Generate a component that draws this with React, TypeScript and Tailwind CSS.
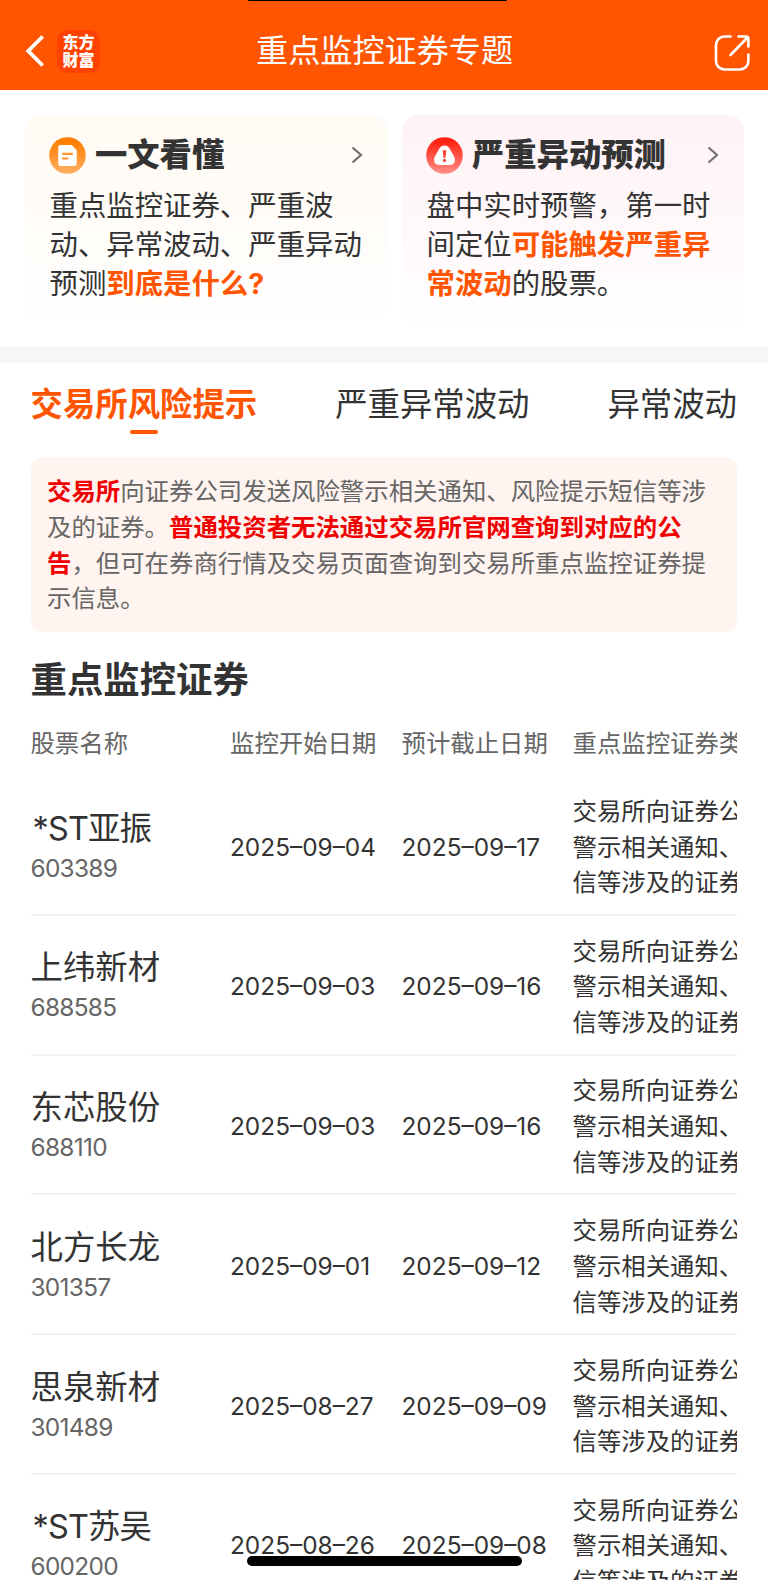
import type { ReactNode } from "react"

interface Stock {
  name: string
  code: string
  start: string
  end: string
}

const stocks: Stock[] = [
  { name: "*ST亚振", code: "603389", start: "2025–09–04", end: "2025–09–17" },
  { name: "上纬新材", code: "688585", start: "2025–09–03", end: "2025–09–16" },
  { name: "东芯股份", code: "688110", start: "2025–09–03", end: "2025–09–16" },
  { name: "北方长龙", code: "301357", start: "2025–09–01", end: "2025–09–12" },
  { name: "思泉新材", code: "301489", start: "2025–08–27", end: "2025–09–09" },
  { name: "*ST苏吴", code: "600200", start: "2025–08–26", end: "2025–09–08" },
]

function DocIcon() {
  return (
    <svg viewBox="0 0 37 37" className="h-[37px] w-[37px] shrink-0">
      <defs>
        <linearGradient id="doc" x1="0" y1="0" x2="0" y2="1">
          <stop offset="0.1" stopColor="#ff7d00" />
          <stop offset="1" stopColor="#ffaf66" />
        </linearGradient>
      </defs>
      <circle cx="18.5" cy="18.5" r="18.3" fill="url(#doc)" />
      <path
        d="M11.5 8h10.2a2 2 0 0 1 1.4.6l4 4a2 2 0 0 1 .6 1.400v12.700a2.300 2.300 0 0 1-2.300 2.300H11.500a2.300 2.300 0 0 1-2.300-2.300V10.300a2.300 2.300 0 0 1 2.300-2.300Z"
        fill="#fff"
      />
      <path d="M14 16.800h9M14 21.500h4.500" stroke="#ff9229" strokeWidth="2.200" strokeLinecap="round" />
    </svg>
  )
}

function AlertIcon() {
  return (
    <svg viewBox="0 0 37 37" className="h-[37px] w-[37px] shrink-0">
      <defs>
        <linearGradient id="alert" x1="0" y1="0" x2="0" y2="1">
          <stop offset="0.1" stopColor="#ff2110" />
          <stop offset="1" stopColor="#ff8f88" />
        </linearGradient>
      </defs>
      <circle cx="18.5" cy="18.5" r="18.3" fill="url(#alert)" />
      <path
        d="M18.5 8.600c2.200 0 3.900 1 5.200 3.100l4 7c2.600 4.800 1 9.300-4.200 9.300h-10c-5.200 0-6.800-4.500-4.200-9.300l4-7c1.300-2.100 3-3.100 5.200-3.100Z"
        fill="#fff"
      />
      <path d="M16.600 13.200h3.800l-.9 7.600h-2Z" fill="#ff4035" />
      <circle cx="18.5" cy="23.400" r="1.600" fill="#ff4035" />
    </svg>
  )
}

function Chevron() {
  return (
    <svg viewBox="0 0 12 18" className="ml-auto h-[18px] w-3" fill="none" stroke="#707070" strokeWidth="2.200">
      <path d="m1.500 1.500 8.500 7.500-8.500 7.500" />
    </svg>
  )
}

function InfoCard({
  icon,
  title,
  className,
  children,
}: {
  icon: ReactNode
  title: string
  className: string
  children: ReactNode
}) {
  return (
    <div className={`h-[216px] rounded-2xl bg-linear-to-b to-white pt-[19px] pl-6 ${className}`}>
      <div className="flex h-[42px] items-center">
        {icon}
        <h2 className="ml-[9px] text-[32.300px] leading-[42px] font-black whitespace-nowrap">{title}</h2>
        <Chevron />
      </div>
      <p className="mt-[9.500px] ml-[0.500px] text-[28.400px] leading-[39.300px] whitespace-nowrap">{children}</p>
    </div>
  )
}

export default function App() {
  return (
    <div
      lang="zh-CN"
      className="relative h-[1580px] w-[768px] overflow-hidden bg-white font-[Inter,'Noto_Sans_CJK_SC',sans-serif] text-[#333]"
    >
      <div className="absolute top-0 left-[248px] h-px w-[259px] rounded-b-full bg-black" />

      <header className="flex h-[90px] items-center bg-[#ff5500] pt-3 text-white">
        <svg viewBox="0 0 20 32" className="ml-[25px] h-8 w-5" fill="none" stroke="#fff" strokeWidth="3.800">
          <path d="M17.700 1.500 3.300 16l14.400 14.500" />
        </svg>
        <div className="ml-3 flex h-[43px] w-[43px] flex-col items-center justify-center rounded-[10px] bg-[#ff4200] pt-px text-[16px] leading-[17.500px] font-black">
          <span>东方</span>
          <span>财富</span>
        </div>
        <h1 className="ml-[156px] text-[32.150px] leading-[48px]">重点监控证券专题</h1>
        <svg
          viewBox="0 0 38 38"
          className="mt-1 ml-auto mr-[17px] h-[38px] w-[38px]"
          fill="none"
          stroke="#fff"
          strokeWidth="2.600"
          strokeLinecap="round"
        >
          <path d="M17.500 2.500H11.500a8.500 8.500 0 0 0-8.500 8.500v16a8.500 8.500 0 0 0 8.500 8.500h15.400a8.500 8.500 0 0 0 8.500-8.500v-6.500" />
          <path d="M25.500 2.500h7.400a2.500 2.500 0 0 1 2.500 2.500v7.500M34.500 3.500l-17 17.500" />
        </svg>
      </header>

      <section className="flex h-[257px] gap-[15px] pt-[25px] pl-[25px]">
        <InfoCard icon={<DocIcon />} title="一文看懂" className="w-[362px] from-[#fffaf3] pr-6">
          重点监控证券、严重波
          <br />
          动、异常波动、严重异动
          <br />
          预测<b className="text-[#ff5500]">到底是什么?</b>
        </InfoCard>
        <InfoCard icon={<AlertIcon />} title="严重异动预测" className="w-[342px] from-[#fff2f5] pr-[25px]">
          盘中实时预警，第一时
          <br />
          间定位<b className="text-[#ff5500]">可能触发严重异</b>
          <br />
          <b className="text-[#ff5500]">常波动</b>的股票。
        </InfoCard>
      </section>

      <div className="h-4 bg-[#f7f7f9]" />

      <main className="pr-[31px] pl-[30.500px]">
        <nav className="flex h-[94px] justify-between pt-[18px] text-[32.400px] leading-[48px] whitespace-nowrap">
          <div className="flex flex-col items-center font-bold text-[#ff5500]">
            交易所风险提示
            <span className="mt-px h-1 w-7 rounded-full bg-[#ff5500]" />
          </div>
          <span>严重异常波动</span>
          <span>异常波动</span>
        </nav>

        <p className="h-[175px] rounded-xl bg-[#fff4f0] px-[16.500px] pt-[17px] text-[24.420px] leading-[35.800px] whitespace-nowrap text-[#666]">
          <b className="text-[#f00000]">交易所</b>向证券公司发送风险警示相关通知、风险提示短信等涉
          <br />
          及的证券。<b className="text-[#f00000]">普通投资者无法通过交易所官网查询到对应的公</b>
          <br />
          <b className="text-[#f00000]">告</b>，但可在券商行情及交易页面查询到交易所重点监控证券提
          <br />
          示信息。
        </p>

        <h2 className="mt-[21px] text-[36.400px] leading-[54px] font-bold">重点监控证券</h2>

        <div className="overflow-hidden">
          <div className="grid h-[69px] w-[1000px] grid-cols-[199.500px_171.500px_171px_1fr] pt-[17.500px] text-[24.400px] leading-9 text-[#666]">
            <span>股票名称</span>
            <span>监控开始日期</span>
            <span>预计截止日期</span>
            <span>重点监控证券类型</span>
          </div>

          {stocks.map((stock) => (
            <div
              key={stock.code}
              className="grid h-[139.800px] w-[1000px] grid-cols-[199.500px_171.500px_171px_1fr] items-center border-b-2 border-[#f2f2f2] pt-[5px] text-[24.400px] leading-[35.800px] whitespace-nowrap"
            >
              <div className="-mt-[3px]">
                <div
                  className={`text-[32.400px] leading-[45px] ${stock.name.startsWith("*") ? "pl-[2px] tracking-[-0.800px]" : ""}`}
                >
                  {stock.name}
                </div>
                <div className="tracking-[-0.700px] text-[#666]">{stock.code}</div>
              </div>
              <span>{stock.start}</span>
              <span>{stock.end}</span>
              <p>
                交易所向证券公司发送风险
                <br />
                警示相关通知、风险提示短
                <br />
                信等涉及的证券
              </p>
            </div>
          ))}
        </div>
      </main>

      <div className="absolute top-[1555.500px] left-[247px] h-[10px] w-[275px] rounded-full bg-black" />
    </div>
  )
}
